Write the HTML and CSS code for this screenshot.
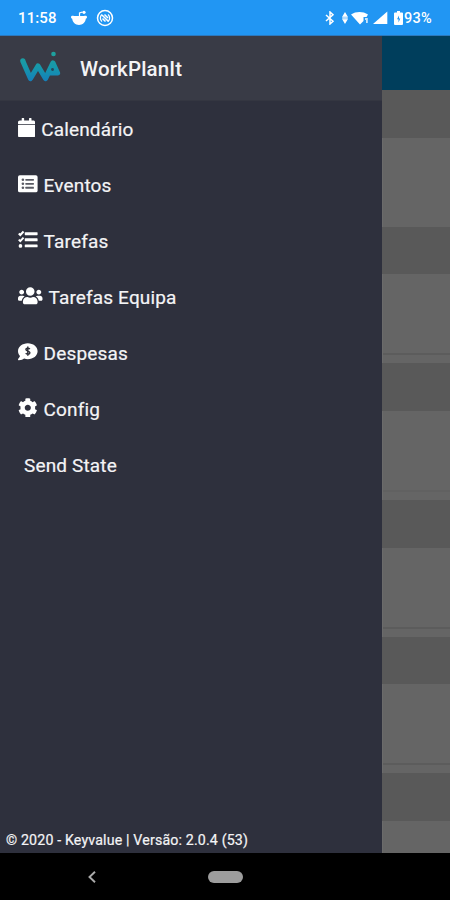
FILE: index.html
```html
<!DOCTYPE html>
<html lang="pt">
<head>
<meta charset="utf-8">
<title>WorkPlanIt</title>
<link rel="stylesheet" href="styles.css">
</head>
<body>
<div class="screen">
  <header class="status">
    <span class="time">11:58</span>
    <svg class="ic-reddit" viewBox="0 0 18 16"><path d="M1 7C1 5.500 3 5.500 4 6h10c1-.5 3-.5 3 1 0 1-.6 1.500-1.200 1.800C15.500 12.500 12.500 15 9 15S2.500 12.500 2.200 8.800C1.600 8.500 1 8 1 7z"/><path class="line" d="M9.500 6V3l3-1" stroke-width="1.200"/><circle cx="14" cy="2.300" r="1.600"/></svg>
    <svg class="ic-sync line" viewBox="0 0 18 18"><circle cx="9" cy="9" r="7.500" stroke-width="1.500"/><path d="M6 12.500A4.600 4.600 0 0 1 6 5.500M12 5.500A4.600 4.600 0 0 1 12 12.500" stroke-width="1.300"/><path d="M6 6l6.500 6.500M6.500 9.500l3 3M8.500 5.500l3.500 3.500" stroke-width="1.500"/></svg>
    <span class="grow"></span>
    <svg class="ic-bt" viewBox="0 0 10 14"><path class="line" d="M1 4l7 6.300L5 13V1l3 2.700L1 10" stroke-width="1.500"/></svg>
    <svg class="ic-data" viewBox="0 0 6 14"><path d="M3 1l2.800 4.800H.2zM3 13l2.800-4.800H.2z"/><path d="M.2 5.500h5.600v3H.2z" opacity=".65"/></svg>
    <svg class="ic-wifi" viewBox="0 0 18 14"><path d="M0 3.500C5 .200 12 .200 17 3.500L15.500 6H12.500v4L9 13.500z"/><path d="M14 7h2.800v5H15V9h-1z" opacity=".75"/></svg>
    <svg class="ic-signal" viewBox="0 0 15 14"><path d="M0 13L14.300.5V13z"/></svg>
    <svg class="ic-batt" viewBox="0 0 9 14"><path d="M3 0h3v1.500h2q1 0 1 1V13q0 1-1 1H1q-1 0-1-1V2.500q0-1 1-1h2z"/><path d="M5 4.500L3 8.300h1.500V11.500l1.800-4H5z" fill="#2196f3"/></svg>
    <span class="pct">93%</span>
  </header>
  <div class="body">
    <aside class="drawer">
      <div class="brand">
        <svg class="logo" viewBox="0 0 42 34">
          <defs><linearGradient id="g" x1="0" y1="0" x2="0" y2="34" gradientUnits="userSpaceOnUse"><stop offset="0" stop-color="#20a39c"/><stop offset=".5" stop-color="#1696ab"/><stop offset="1" stop-color="#1479c0"/></linearGradient></defs>
          <path d="M3 10.500L10.500 27.500L18 15L25.500 27.500L33 12L37.500 22H28" fill="none" stroke="url(#g)" stroke-width="5.200" stroke-linejoin="round"/>
          <circle cx="2.800" cy="9.800" r="2.600" fill="url(#g)"/><circle cx="33.500" cy="3" r="2.300" fill="url(#g)"/><circle cx="32.500" cy="18.500" r="1.400" fill="#25485a"/>
        </svg>
        <h1>WorkPlanIt</h1>
      </div>
      <nav>
        <a class="item"><svg class="i cal" viewBox="0 0 448 512"><path d="M12 176h424c6.600 0 12 5.400 12 12v276c0 26.500-21.500 48-48 48H48c-26.500 0-48-21.500-48-48V188c0-6.600 5.400-12 12-12zm436-28v-36c0-26.500-21.500-48-48-48h-48V12c0-6.600-5.400-12-12-12h-40c-6.600 0-12 5.400-12 12v52H160V12c0-6.600-5.400-12-12-12h-40c-6.600 0-12 5.400-12 12v52H48C21.500 64 0 85.500 0 112v36c0 6.600 5.400 12 12 12h424c6.600 0 12-5.400 12-12z"/></svg><span>Calendário</span></a>
        <a class="item"><svg class="i" viewBox="0 0 512 512"><rect y="32" width="512" height="448" rx="48"/><g fill="#5a5b64"><circle cx="128" cy="152" r="34"/><circle cx="128" cy="256" r="34"/><circle cx="128" cy="360" r="34"/><rect x="192" y="128" width="224" height="48" rx="10"/><rect x="192" y="232" width="224" height="48" rx="10"/><rect x="192" y="336" width="224" height="48" rx="10"/></g></svg><span>Eventos</span></a>
        <a class="item"><svg class="i" viewBox="0 0 512 512"><path class="line" d="M20 92l40 38 85-92M20 252l40 38 85-92" stroke-width="52"/><circle cx="64" cy="416" r="48"/><rect x="176" y="58" width="336" height="76" rx="16"/><rect x="176" y="218" width="336" height="76" rx="16"/><rect x="176" y="378" width="336" height="76" rx="16"/></svg><span>Tarefas</span></a>
        <a class="item"><svg class="i wide" viewBox="0 0 640 512"><path d="M96 224c35.300 0 64-28.700 64-64s-28.700-64-64-64-64 28.700-64 64 28.700 64 64 64zm448 0c35.300 0 64-28.700 64-64s-28.700-64-64-64-64 28.700-64 64 28.700 64 64 64zm32 32h-64c-17.600 0-33.500 7.100-45.100 18.600 40.300 22.100 68.900 62 75.100 109.400h66c17.700 0 32-14.300 32-32v-32c0-35.300-28.700-64-64-64zm-256 0c61.900 0 112-50.100 112-112S381.900 32 320 32 208 82.100 208 144s50.100 112 112 112zm76.800 32h-8.300c-20.800 10-43.900 16-68.500 16s-47.600-6-68.500-16h-8.300C179.600 288 128 339.600 128 403.200V432c0 26.500 21.500 48 48 48h288c26.500 0 48-21.500 48-48v-28.800c0-63.600-51.600-115.200-115.200-115.200zm-223.700-13.400C161.500 263.100 145.600 256 128 256H64c-35.300 0-64 28.700-64 64v32c0 17.700 14.300 32 32 32h65.900c6.300-47.400 34.900-87.300 75.200-109.400z"/></svg><span>Tarefas Equipa</span></a>
        <a class="item"><svg class="i" viewBox="0 0 512 512"><path d="M256 32C114.600 32 0 125.100 0 240c0 47.600 19.900 91.200 52.900 126.300C38 405.700 7 439.100 6.500 439.500c-6.600 7-8.400 17.200-4.600 26S14.400 480 24 480c61.500 0 110-25.700 139.100-46.300C192 442.800 223.200 448 256 448c141.400 0 256-93.100 256-208S397.400 32 256 32z"/><path d="M256 118v244M311 184c-30-31-104-31-104 12 0 50 104 34 104 86 0 45-77 48-110 14" fill="none" stroke="#2f303a" stroke-width="38"/></svg><span>Despesas</span></a>
        <a class="item"><svg class="i" viewBox="0 0 512 512"><path d="M487.400 315.700l-42.600-24.600c4.300-23.200 4.300-47 0-70.200l42.600-24.600c4.900-2.800 7.100-8.600 5.500-14-11.100-35.600-30-67.800-54.700-94.600-3.800-4.100-10-5.100-14.800-2.300L380.800 110c-17.900-15.400-38.500-27.300-60.800-35.100V25.800c0-5.600-3.900-10.500-9.400-11.700-36.700-8.200-74.300-7.800-109.200 0-5.500 1.200-9.400 6.100-9.400 11.700V75c-22.200 7.900-42.800 19.800-60.800 35.100L88.700 85.500c-4.900-2.800-11-1.900-14.800 2.300-24.700 26.700-43.600 58.900-54.700 94.600-1.700 5.400.6 11.200 5.500 14L67.300 221c-4.300 23.200-4.300 47 0 70.200l-42.600 24.600c-4.900 2.800-7.100 8.600-5.500 14 11.100 35.600 30 67.800 54.700 94.600 3.800 4.100 10 5.100 14.800 2.300l42.600-24.600c17.900 15.400 38.500 27.300 60.800 35.100v49.200c0 5.600 3.900 10.500 9.400 11.700 36.700 8.200 74.300 7.800 109.200 0 5.500-1.200 9.400-6.100 9.400-11.700v-49.200c22.200-7.900 42.800-19.800 60.800-35.100l42.600 24.600c4.900 2.800 11 1.900 14.800-2.300 24.700-26.700 43.600-58.900 54.700-94.600 1.500-5.500-.7-11.300-5.600-14.100zM256 336c-44.100 0-80-35.900-80-80s35.900-80 80-80 80 35.900 80 80-35.900 80-80 80z"/></svg><span>Config</span></a>
        <a class="item plain"><span>Send State</span></a>
      </nav>
      <footer>© 2020 - Keyvalue | Versão: 2.0.4 (53)</footer>
    </aside>
    <main class="page">
      <div class="topbar"></div>
      <div class="label first"></div><div class="card"></div>
      <div class="label"></div><div class="card ruled"></div>
      <div class="label"></div><div class="card faint"></div>
      <div class="label"></div><div class="card ruled"></div>
      <div class="label"></div><div class="card ruled"></div>
      <div class="label"></div><div class="card"></div>
    </main>
  </div>
  <div class="navbar">
    <svg class="back" viewBox="0 0 8 12"><path d="M7 .8L1.500 6L7 11.200" fill="none" stroke="#aaa" stroke-width="1.900"/></svg>
    <span class="pill"></span>
  </div>
</div>
</body>
</html>
```
FILE: styles.css
```css
* { box-sizing: border-box; }
body { margin: 0; font-family: Roboto, sans-serif; color: #f4f4f6; }
svg { display: block; flex: none; fill: #fff; }
.line { fill: none; stroke: #fff; }
.screen { width: 450px; height: 900px; display: flex; flex-direction: column; overflow: hidden; background: #000; }
.status { height: 36px; flex: none; display: flex; align-items: center; background: #2196f3; border-bottom: 1px solid #2c78bd; padding: 0 17px 0 18px; color: #fff; font-weight: 500; }
.time { width: 38px; font-size: 15px; letter-spacing: .1px; white-space: nowrap; }
.ic-reddit { width: 18px; height: 16px; margin-left: 14px; }
.ic-sync { width: 18px; height: 18px; margin-left: 8px; }
.grow { flex: 1; }
.ic-bt { width: 10px; height: 14px; margin-right: 7px; }
.ic-data { width: 6px; height: 14px; margin-right: 3px; }
.ic-wifi { width: 18px; height: 14px; margin-right: 4px; }
.ic-signal { width: 15px; height: 14px; margin-right: 6px; }
.ic-batt { width: 9px; height: 14px; margin-right: 1px; }
.pct { width: 29px; padding-top: 1px; font-size: 14.500px; letter-spacing: .2px; white-space: nowrap; }
.body { height: 817px; flex: none; display: flex; }
.drawer { width: 382px; display: flex; flex-direction: column; background: #2e303d; }
.brand { height: 65px; flex: none; display: flex; align-items: center; padding-left: 20px; background: #393b46; border-bottom: 1px solid #343641; }
.logo { width: 42px; height: 34px; }
.brand h1 { margin: 1px 0 0 18px; font-size: 20.500px; font-weight: 500; line-height: 24px; letter-spacing: .15px; }
nav { flex: 1; }
.item { height: 56px; display: flex; align-items: center; padding-left: 18px; font-size: 19px; letter-spacing: .15px; -webkit-text-stroke: .2px #f4f4f6; }
.item span { padding-top: 1px; }
.i { width: 19.600px; height: 19.600px; margin: -3px 6px 0 0; }
.cal { width: 17.200px; }
.wide { width: 24.500px; }
.plain { padding-left: 24px; }
footer { height: 27px; padding-left: 6px; font-size: 14.200px; letter-spacing: .16px; line-height: 28px; white-space: nowrap; -webkit-text-stroke: .2px #f4f4f6; }
.page { flex: 1; display: flex; flex-direction: column; overflow: hidden; background: #656565; }
.topbar { height: 54px; flex: none; background: #003e5c; }
.label { height: 47.600px; flex: none; background: #595959; }
.card { height: 89.100px; flex: none; background: #656565; border-left: 1px solid #6b6b6b; }
.ruled::after, .faint::after { content: ""; display: block; height: 2px; margin-top: 79px; background: #5c5c5c; }
.faint::after { background: #616161; }
.navbar { flex: 1; display: flex; align-items: center; padding-left: 88px; }
.back { width: 8px; height: 12px; margin-right: 112px; }
.pill { width: 35px; height: 12px; border-radius: 6px; background: #9d9d9d; }
```
